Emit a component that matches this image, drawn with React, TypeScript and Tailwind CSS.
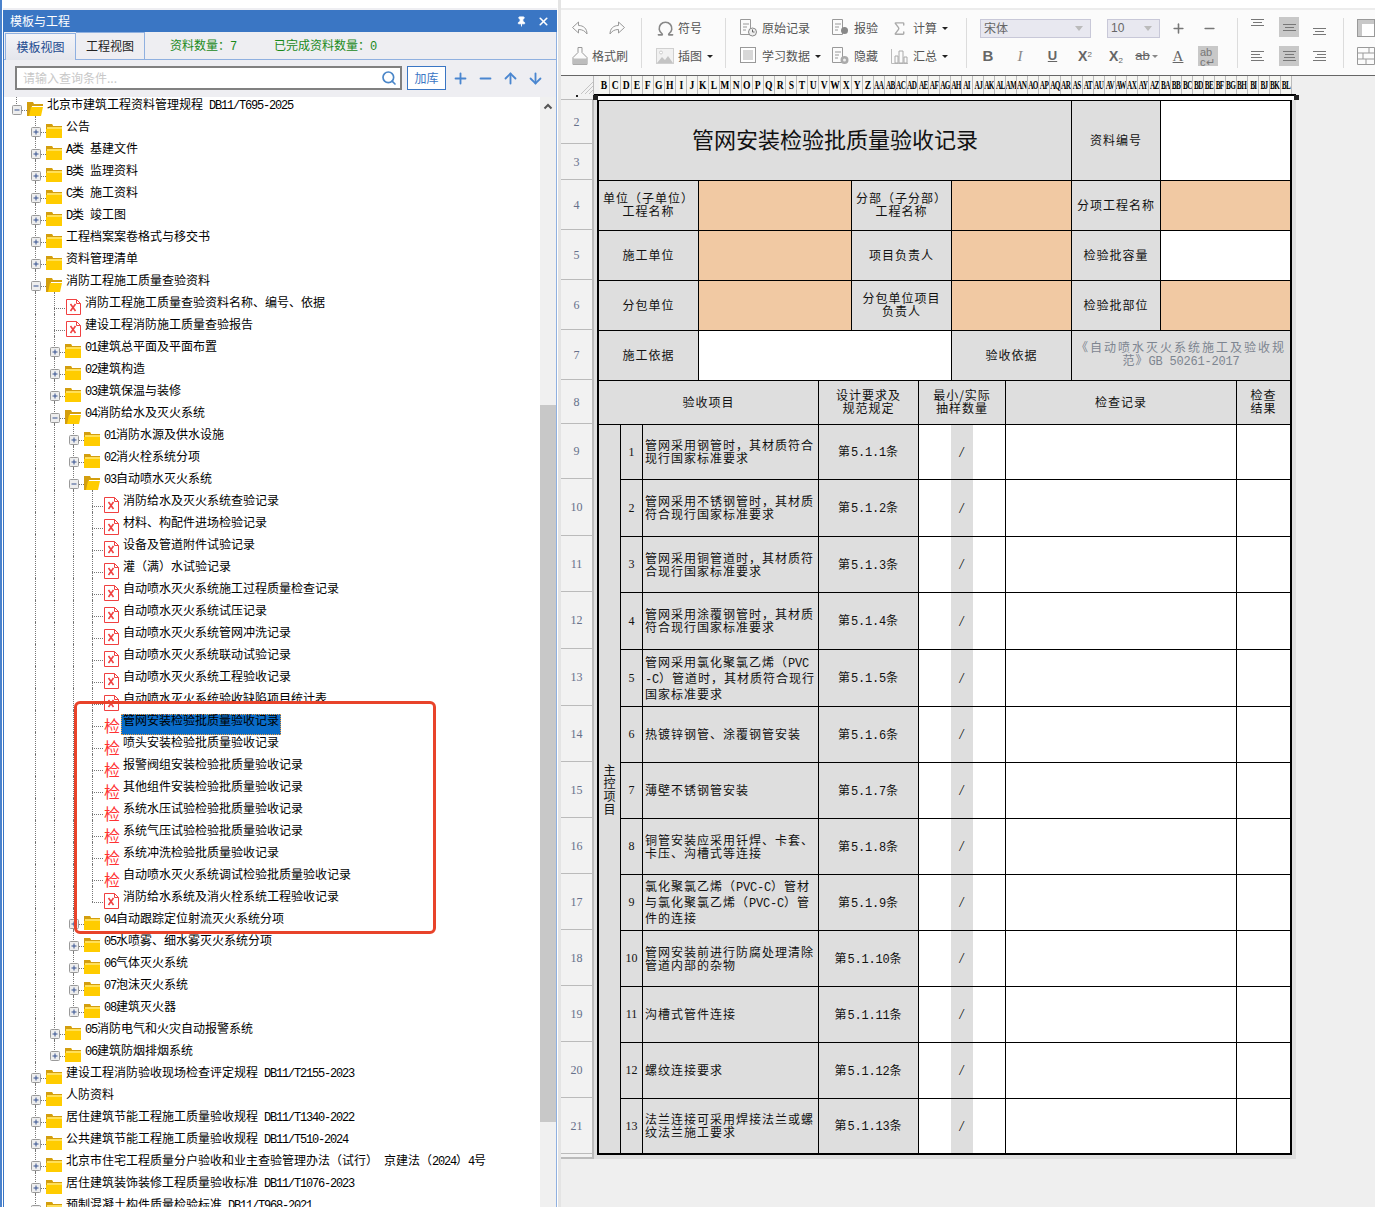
import React from "react";
import { ArrowDown, ArrowUp, Minus, Omega, Pin, Plus, Search, Sigma, X } from "lucide-react";

type Kind = "closed" | "open" | "x" | "jian";

// depth, icon, label
const treeRows: [number, Kind, string][] = [
  [0, "open", "北京市建筑工程资料管理规程 DB11/T695-2025"],
  [1, "closed", "公告"],
  [1, "closed", "A类 基建文件"],
  [1, "closed", "B类 监理资料"],
  [1, "closed", "C类 施工资料"],
  [1, "closed", "D类 竣工图"],
  [1, "closed", "工程档案案卷格式与移交书"],
  [1, "closed", "资料管理清单"],
  [1, "open", "消防工程施工质量查验资料"],
  [2, "x", "消防工程施工质量查验资料名称、编号、依据"],
  [2, "x", "建设工程消防施工质量查验报告"],
  [2, "closed", "01建筑总平面及平面布置"],
  [2, "closed", "02建筑构造"],
  [2, "closed", "03建筑保温与装修"],
  [2, "open", "04消防给水及灭火系统"],
  [3, "closed", "01消防水源及供水设施"],
  [3, "closed", "02消火栓系统分项"],
  [3, "open", "03自动喷水灭火系统"],
  [4, "x", "消防给水及灭火系统查验记录"],
  [4, "x", "材料、构配件进场检验记录"],
  [4, "x", "设备及管道附件试验记录"],
  [4, "x", "灌（满）水试验记录"],
  [4, "x", "自动喷水灭火系统施工过程质量检查记录"],
  [4, "x", "自动喷水灭火系统试压记录"],
  [4, "x", "自动喷水灭火系统管网冲洗记录"],
  [4, "x", "自动喷水灭火系统联动试验记录"],
  [4, "x", "自动喷水灭火系统工程验收记录"],
  [4, "x", "自动喷水灭火系统验收缺陷项目统计表"],
  [4, "jian", "管网安装检验批质量验收记录"],
  [4, "jian", "喷头安装检验批质量验收记录"],
  [4, "jian", "报警阀组安装检验批质量验收记录"],
  [4, "jian", "其他组件安装检验批质量验收记录"],
  [4, "jian", "系统水压试验检验批质量验收记录"],
  [4, "jian", "系统气压试验检验批质量验收记录"],
  [4, "jian", "系统冲洗检验批质量验收记录"],
  [4, "jian", "自动喷水灭火系统调试检验批质量验收记录"],
  [4, "x", "消防给水系统及消火栓系统工程验收记录"],
  [3, "closed", "04自动跟踪定位射流灭火系统分项"],
  [3, "closed", "05水喷雾、细水雾灭火系统分项"],
  [3, "closed", "06气体灭火系统"],
  [3, "closed", "07泡沫灭火系统"],
  [3, "closed", "08建筑灭火器"],
  [2, "closed", "05消防电气和火灾自动报警系统"],
  [2, "closed", "06建筑防烟排烟系统"],
  [1, "closed", "建设工程消防验收现场检查评定规程 DB11/T2155-2023"],
  [1, "closed", "人防资料"],
  [1, "closed", "居住建筑节能工程施工质量验收规程 DB11/T1340-2022"],
  [1, "closed", "公共建筑节能工程施工质量验收规程 DB11/T510-2024"],
  [1, "closed", "北京市住宅工程质量分户验收和业主查验管理办法（试行） 京建法（2024）4号"],
  [1, "closed", "居住建筑装饰装修工程质量验收标准 DB11/T1076-2023"],
  [1, "closed", "预制混凝土构件质量检验标准 DB11/T968-2021"],
];

const inspectRows: [string[], string][] = [
  [["管网采用钢管时，其材质符合", "现行国家标准要求"], "第5.1.1条"],
  [["管网采用不锈钢管时，其材质", "符合现行国家标准要求"], "第5.1.2条"],
  [["管网采用铜管道时，其材质符", "合现行国家标准要求"], "第5.1.3条"],
  [["管网采用涂覆钢管时，其材质", "符合现行国家标准要求"], "第5.1.4条"],
  [["管网采用氯化聚氯乙烯（PVC", "-C）管道时，其材质符合现行", "国家标准要求"], "第5.1.5条"],
  [["热镀锌钢管、涂覆钢管安装"], "第5.1.6条"],
  [["薄壁不锈钢管安装"], "第5.1.7条"],
  [["铜管安装应采用钎焊、卡套、", "卡压、沟槽式等连接"], "第5.1.8条"],
  [["氯化聚氯乙烯（PVC-C）管材", "与氯化聚氯乙烯（PVC-C）管", "件的连接"], "第5.1.9条"],
  [["管网安装前进行防腐处理清除", "管道内部的杂物"], "第5.1.10条"],
  [["沟槽式管件连接"], "第5.1.11条"],
  [["螺纹连接要求"], "第5.1.12条"],
  [["法兰连接可采用焊接法兰或螺", "纹法兰施工要求"], "第5.1.13条"],
];

const rowHeaders: [string, string][] = [
  ["2", "h-[44px]"], ["3", "h-[36px]"], ["4", "h-[50px]"], ["5", "h-[50px]"], ["6", "h-[50px]"],
  ["7", "h-[50px]"], ["8", "h-[44px]"], ["9", "h-[55px]"], ["10", "h-[57px]"], ["11", "h-[56px]"],
  ["12", "h-[57px]"], ["13", "h-[57px]"], ["14", "h-[56px]"], ["15", "h-[56px]"], ["16", "h-[56px]"],
  ["17", "h-[56px]"], ["18", "h-[56px]"], ["19", "h-[56px]"], ["20", "h-[56px]"], ["21", "h-[56px]"],
];

const letters = "ABCDEFGHIJKLMNOPQRSTUVWXYZ".split("");
const columns = [
  ...letters.slice(1),
  ...letters.map((l) => "A" + l),
  ...letters.slice(0, 12).map((l) => "B" + l),
];

// latin runs in the old Song font are 6px wide and tall, so squeeze Liberation Mono to that
function Mix({ t, wide }: { t: string; wide?: boolean }) {
  return (
    <>
      {t.split(/([\x20-\x7e]+)/).map((s, i) =>
        /^[\x20-\x7e]+$/.test(s) ? (
          <span key={i} className={`font-['Liberation_Mono',monospace] text-[12px] ${wide ? "tracking-[-.2px]" : "tracking-[-1.2px]"}`}>{s}</span>
        ) : (
          s
        )
      )}
    </>
  );
}

function Folder({ open }: { open: boolean }) {
  return open ? (
    <svg width="16" height="14" viewBox="0 0 16 14">
      <path d="M0 0h6l1 2h9v2H5L3 14H0z" fill="#d39e0e" />
      <path d="M4 5h12l-2 9H2z" fill="#ffcc00" />
    </svg>
  ) : (
    <svg width="16" height="14" viewBox="0 0 16 14">
      <path d="M0 0h6l1 2h9v12H0z" fill="#ffcc00" />
      <path d="M0 0h6l1 2h9v1H1v2H0z" fill="#d39e0e" />
      <path d="M1 4h15" stroke="#fff3b0" />
    </svg>
  );
}

function XDoc() {
  return (
    <svg width="15" height="16" viewBox="0 0 15 16">
      <path d="M.5.5h10l4 4v11H.5z" fill="#fff" stroke="#f04040" />
      <path d="M10.5.5v4h4" fill="none" stroke="#f04040" />
      <path d="M4.5 5l5 7M9.5 5l-5 7" stroke="#f04040" strokeWidth="1.6" />
    </svg>
  );
}

function Expander({ open }: { open: boolean }) {
  return (
    <svg width="10" height="10" viewBox="0 0 10 10" className="block">
      <rect x=".5" y=".5" width="9" height="9" rx="1" fill="#eeeeee" stroke="#9a9a9a" />
      <path d="M2.5 5h5" stroke="#35508f" />
      {!open && <path d="M5 2.5v5" stroke="#35508f" />}
    </svg>
  );
}

function TreeRow({ index }: { index: number }) {
  const [depth, kind, label] = treeRows[index];
  const next = treeRows[index + 1];
  const last = depth === 0 || (next && next[0] < depth);
  const folder = kind === "open" || kind === "closed";
  const selected = index === 28;
  return (
    <div className="flex h-[22px] pl-[16px] text-[12px] leading-[13px] text-black whitespace-pre">
      {Array.from({ length: depth }).map((_, k) => (
        <div key={k} className={`w-[19px] h-full ${k > 0 ? "border-l border-dotted border-[#777]" : ""}`} />
      ))}
      <div className="relative w-[11px] h-full shrink-0">
        <div className={`absolute left-0 top-0 border-l border-dotted border-[#777] ${last ? "h-[16px]" : "h-full"}`} />
        <div className="absolute left-0 top-[16px] w-[11px] border-t border-dotted border-[#777]" />
        {folder && (
          <div className="absolute left-[-4px] top-[11px]">
            <Expander open={kind === "open"} />
          </div>
        )}
      </div>
      <div className="w-[17px] shrink-0">
        {folder && <div className="mt-[8px]"><Folder open={kind === "open"} /></div>}
        {kind === "x" && <div className="mt-[7px] ml-[1px]"><XDoc /></div>}
        {kind === "jian" && <div className="mt-[7px] ml-[1px] text-[16px] leading-[16px] text-[#ff3333]">检</div>}
      </div>
      {selected ? (
        <span className="mt-[4px] ml-[1px] h-[21px] px-px bg-[#0a6cc9] border border-dotted border-[#f0a040]">
          <span className="relative -top-[2px]"><Mix t={label} /></span>
        </span>
      ) : (
        <span className={`mt-[3px] ml-[3px] ${index === 27 ? "h-[10px] overflow-hidden" : ""}`}>
          <Mix t={label} />
        </span>
      )}
    </div>
  );
}

function LeftPanel() {
  return (
    <div className="w-[554px] ml-[3px] shrink-0 mt-[8px] flex flex-col bg-[#eeeef2] border-t-2 border-[#eeeef2] overflow-hidden">
      <div className="h-[22px] bg-[#3a76c4] flex items-center pl-[7px] pr-[7px] text-white text-[12px] shrink-0">
        <span className="flex-1">模板与工程</span>
        <Pin size={11} className="mr-[10px] fill-white" />
        <X size={13} strokeWidth={3} />
      </div>
      <div className="border-l border-[#3a76c4] border-r border-r-[#8fb0e0] flex-1 flex flex-col min-h-0">
        <div className="h-[28px] flex items-end border-b border-[#8fb0e0] text-[12px] shrink-0">
          <div className="ml-px w-[71px] h-[27px] -mb-px flex items-center justify-center text-[#1c4a8f] border-t border-x border-[#8fb0e0] bg-gradient-to-b from-[#f4f4f8] to-[#e4e6ec]">模板视图</div>
          <div className="w-[69px] h-[27px] flex items-center justify-center text-[#222] border-t border-r border-[#8fb0e0]">工程视图</div>
          <div className="ml-[25px] mb-[3px] text-[#1a8a1a]">资料数量：<Mix t="7" /></div>
          <div className="ml-[38px] mb-[3px] text-[#1a8a1a]">已完成资料数量：<Mix t="0" /></div>
        </div>
        <div className="h-[37px] flex items-start pt-[6px] pl-[11px] shrink-0">
          <div className="w-[387px] h-[24px] bg-white border-2 border-[#808080] flex items-center pl-[6px] pr-[3px] text-[12px] text-[#c8c8c8]">
            <span className="flex-1">请输入查询条件...</span>
            <Search size={16} strokeWidth={2.5} className="text-[#4a86c8]" />
          </div>
          <div className="ml-[5px] w-[39px] h-[24px] bg-white border border-[#3a76c4] flex items-center justify-center text-[12px] text-[#3a76c4]">加库</div>
          <div className="flex items-center h-[24px] text-[#4a86d0] ml-[6px] gap-[8px]">
            <Plus size={17} strokeWidth={2.6} />
            <Minus size={17} strokeWidth={2.6} />
            <ArrowUp size={17} strokeWidth={2.6} />
            <ArrowDown size={17} strokeWidth={2.6} />
          </div>
        </div>
        <div className="flex-1 flex min-h-0 bg-white overflow-hidden">
          <div className="flex-1 min-w-0 overflow-hidden">
            <div className="-mt-[3px] -ml-[4px]">
              {treeRows.map((_, i) => <TreeRow key={i} index={i} />)}
            </div>
          </div>
          <div className="w-[16px] bg-[#f0f0f0] flex flex-col shrink-0">
            <svg width="16" height="20" viewBox="0 0 16 20" className="shrink-0">
              <path d="M4.5 11.500L8 8l3.500 3.500" fill="none" stroke="#555" strokeWidth="2" />
            </svg>
            <div className="h-[288px] shrink-0" />
            <div className="h-[717px] shrink-0 bg-[#c8c8c8]" />
          </div>
        </div>
      </div>
    </div>
  );
}

function Caret() {
  return <span className="ml-[5px] w-0 h-0 border-x-[3px] border-x-transparent border-t-[3px] border-t-[#222] inline-block" />;
}

const iconBase = "shrink-0 text-[#999]";

function Undo({ flip }: { flip?: boolean }) {
  return (
    <svg width="18" height="16" viewBox="0 0 18 16" className={`${iconBase} ${flip ? "-scale-x-100" : ""}`}>
      <path d="M7.5 2L1.5 7.5l6 5.5V9.5c4 0 6.5 1.5 8.5 4.5 0-5.500-3.500-8.500-8.500-8.500z" fill="none" stroke="currentColor" />
    </svg>
  );
}

function Brush() {
  return (
    <svg width="18" height="20" viewBox="0 0 18 20" className={iconBase}>
      <path d="M7 1.500h4v5l5 5v7H2v-7l5-5z" fill="none" stroke="currentColor" />
      <path d="M2 12.500h14v6H2z" fill="#bdbdbd" />
    </svg>
  );
}

function ImageIcon() {
  return (
    <svg width="18" height="16" viewBox="0 0 18 16" className={iconBase}>
      <rect x=".5" y=".5" width="17" height="15" fill="#f1f1f1" stroke="#d0d0d0" />
      <circle cx="5" cy="4.500" r="1.500" fill="#fff" stroke="#ccc" />
      <path d="M1 15l5-6 3 3 3-4 5 7z" fill="#c4c4c4" />
    </svg>
  );
}

function DocIcon({ badge }: { badge: "clock" | "dot" | "gear" }) {
  return (
    <svg width="18" height="18" viewBox="0 0 18 18" className={iconBase}>
      <path d="M.5.500h10v15H.5z" fill="none" stroke="currentColor" />
      <path d="M3 5h6M3 8h4M3 11h3" stroke="currentColor" />
      {badge === "clock" && (
        <>
          <circle cx="12.500" cy="13" r="4" fill="#eee" stroke="#888" />
          <path d="M12.500 10.500V13h2" fill="none" stroke="#666" />
        </>
      )}
      {badge === "dot" && <circle cx="12.500" cy="11.500" r="3.500" fill="#888" />}
      {badge === "gear" && (
        <>
          <circle cx="12.500" cy="13" r="4" fill="#aaa" />
          <circle cx="12.500" cy="13" r="1.500" fill="#eee" />
        </>
      )}
    </svg>
  );
}

function StudyIcon() {
  return (
    <svg width="18" height="18" viewBox="0 0 18 18" className={iconBase}>
      <rect x=".5" y=".5" width="15" height="15" fill="#fff" stroke="currentColor" />
      <rect x="3" y="3" width="10" height="10" fill="#d8d8d8" />
    </svg>
  );
}

function ChartIcon() {
  return (
    <svg width="18" height="16" viewBox="0 0 18 16" className={iconBase}>
      <path d="M.5 1v14.500H17" fill="none" stroke="#bbb" />
      <path d="M4 8h3v7H4zM8 3h4v12H8zM13 9h3v6h-3z" fill="none" stroke="#aaa" />
    </svg>
  );
}

function Lines({ widths, align = "center" }: { widths: number[]; align?: "left" | "center" | "right" }) {
  const alignClass = align === "left" ? "items-start" : align === "right" ? "items-end" : "items-center";
  const size: Record<number, string> = { 9: "w-[9px]", 11: "w-[11px]", 13: "w-[13px]" };
  return (
    <div className={`flex flex-col gap-[2px] ${alignClass} w-[13px]`}>
      {widths.map((w, i) => <span key={i} className={`h-px bg-[#777] ${size[w]}`} />)}
    </div>
  );
}

function ToolLabel({ icon, text, caret }: { icon: React.ReactNode; text: string; caret?: boolean }) {
  return (
    <div className="flex items-center h-[28px] text-[12px] text-[#555]">
      <div className="w-[22px] shrink-0">{icon}</div>
      <span>{text}</span>
      {caret && <Caret />}
    </div>
  );
}

function Divider() {
  return <div className="w-px h-[50px] self-center bg-[#dcdcdc] shrink-0" />;
}

function Toolbar() {
  return (
    <div className="h-[68px] bg-[#fbfbfb] border-t-2 border-[#ececec] border-b border-b-[#666] flex shrink-0 overflow-hidden">
      <div className="w-[80px] shrink-0 pt-[4px] pl-[10px]">
        <div className="flex items-center gap-[19px] h-[28px]"><Undo /><Undo flip /></div>
        <div className="flex items-center h-[28px] text-[12px] text-[#555]">
          <div className="w-[21px]"><Brush /></div>格式刷
        </div>
      </div>
      <Divider />
      <div className="w-[83px] shrink-0 pt-[4px] pl-[14px]">
        <ToolLabel icon={<Omega size={19} className="text-[#888]" />} text="符号" />
        <ToolLabel icon={<ImageIcon />} text="插图" caret />
      </div>
      <Divider />
      <div className="w-[240px] shrink-0 pt-[4px] pl-[14px] grid grid-cols-[92px_59px_1fr] grid-rows-[28px_28px] content-start">
        <ToolLabel icon={<DocIcon badge="clock" />} text="原始记录" />
        <ToolLabel icon={<DocIcon badge="dot" />} text="报验" />
        <ToolLabel icon={<Sigma size={17} className="text-[#aaa]" />} text="计算" caret />
        <ToolLabel icon={<StudyIcon />} text="学习数据" caret />
        <ToolLabel icon={<DocIcon badge="gear" />} text="隐藏" />
        <ToolLabel icon={<ChartIcon />} text="汇总" caret />
      </div>
      <Divider />
      <div className="w-[270px] shrink-0 pt-[4px]">
        <div className="flex items-center h-[28px] pl-[13px]">
          <div className="w-[111px] h-[19px] bg-[#e8e8f0] border border-[#c8c8d8] flex items-center px-[3px] text-[12px] text-[#666]">
            <span className="flex-1">宋体</span>
            <span className="mr-[4px] w-0 h-0 border-x-[4px] border-x-transparent border-t-[5px] border-t-[#bbb]" />
          </div>
          <div className="ml-[16px] w-[53px] h-[19px] bg-[#e8e8f0] border border-[#c8c8d8] flex items-center px-[3px] text-[12px] text-[#666]">
            <span className="flex-1 font-['Liberation_Sans',sans-serif]">10</span>
            <span className="mr-[4px] w-0 h-0 border-x-[4px] border-x-transparent border-t-[5px] border-t-[#bbb]" />
          </div>
          <Plus size={15} strokeWidth={2.5} className="ml-[11px] text-[#777]" />
          <Minus size={15} strokeWidth={2.5} className="ml-[16px] text-[#777]" />
        </div>
        <div className="flex items-center h-[28px] pl-[5px] text-[#666]">
          <div className="w-[32px] text-center font-['Liberation_Sans',sans-serif] font-bold text-[15px]">B</div>
          <div className="w-[32px] text-center font-['Liberation_Serif',serif] italic text-[15px] text-[#888]">I</div>
          <div className="w-[33px] text-center font-['Liberation_Sans',sans-serif] font-bold text-[13px] underline">U</div>
          <div className="w-[32px] text-center font-['Liberation_Sans',sans-serif] font-bold text-[14px]">X<sup className="text-[8px] font-normal">2</sup></div>
          <div className="w-[30px] text-center font-['Liberation_Sans',sans-serif] font-bold text-[14px]">X<sub className="text-[8px] font-normal">2</sub></div>
          <div className="w-[31px] flex items-center justify-center font-['Liberation_Sans',sans-serif] text-[13px] line-through">ab<span className="ml-[2px] w-0 h-0 border-x-[3px] border-x-transparent border-t-[3px] border-t-[#888]" /></div>
          <div className="w-[32px] text-center font-['Liberation_Serif',serif] text-[15px] underline">A</div>
          <div className="w-[20px] h-[20px] ml-[4px] bg-[#c8c8c8] text-[#777] font-['Liberation_Sans',sans-serif] text-[11px] leading-[10px] pl-[2px] pt-px">ab<br />c↵</div>
        </div>
      </div>
      <Divider />
      <div className="w-[105px] shrink-0 pt-[4px] pl-[9px]">
        <div className="flex h-[28px] gap-[12px]">
          <div className="w-[20px] h-[20px] mt-[3px] flex justify-center pt-[2px]"><Lines widths={[13, 9, 13]} /></div>
          <div className="w-[20px] h-[20px] mt-[3px] bg-[#c8c8c8] flex items-center justify-center"><Lines widths={[13, 9, 13]} /></div>
          <div className="w-[20px] h-[20px] mt-[3px] -ml-[2px] flex justify-center items-end pb-[2px]"><Lines widths={[13, 9, 13]} /></div>
        </div>
        <div className="flex h-[28px] gap-[12px]">
          <div className="w-[20px] h-[20px] mt-[4px] flex items-center justify-center"><Lines widths={[13, 9, 11, 13]} align="left" /></div>
          <div className="w-[20px] h-[20px] mt-[4px] bg-[#c8c8c8] flex items-center justify-center"><Lines widths={[13, 9, 11, 13]} /></div>
          <div className="w-[20px] h-[20px] mt-[4px] -ml-[2px] flex items-center justify-center"><Lines widths={[13, 9, 11, 13]} align="right" /></div>
        </div>
      </div>
      <Divider />
      <div className="pt-[4px] pl-[13px]">
        <svg width="18" height="18" viewBox="0 0 18 18" className="mt-[5px] block">
          <rect x=".5" y=".5" width="17" height="17" fill="#fff" stroke="#999" />
          <path d="M1 1h16v4H5v12H1z" fill="#c8c8c8" />
        </svg>
        <svg width="18" height="18" viewBox="0 0 18 18" className="mt-[10px] block">
          <path d="M.5.500h17v17H.5zM.5 6h17M.5 12h17M6 6v6M12 .500v5.500M9 12v5.500" fill="none" stroke="#999" />
        </svg>
      </div>
    </div>
  );
}

function ColumnHeader() {
  return (
    <div className="h-[18px] flex shrink-0 bg-[#efefef]">
      <div className="w-[33px] h-full border-r border-[#bbb] bg-[#f2f2f2] flex items-end justify-end shrink-0">
        <svg width="12" height="12" viewBox="0 0 12 12">
          <path d="M0 12L12 0M4 12l8-8M8 12l4-4" stroke="#c4c4c4" />
        </svg>
      </div>
      <div className="w-[5px] bg-[#f2f2f2] shrink-0" />
      {columns.map((c) => (
        <div key={c} className="w-[11px] shrink-0 h-full bg-[#f6f6f2] border-r border-[#bbb] flex items-center justify-center font-['Liberation_Serif',serif] font-bold text-[12px] leading-none text-black overflow-hidden">
          <span className={c.length > 1 ? "inline-block scale-x-[.6] whitespace-nowrap tracking-[-1px]" : "inline-block scale-x-[.8]"}>{c}</span>
        </div>
      ))}
    </div>
  );
}

function RowHeader() {
  return (
    <div className="w-[33px] shrink-0 flex flex-col">
      <div className="h-[6px] bg-[#f2f2f2] border-b border-[#bbb] border-r flex justify-center">
        <span className="w-[2px] h-[2px] bg-[#222] mt-px" />
      </div>
      {rowHeaders.map(([label, h]) => (
        <div key={label} className={`${h} bg-[#f2f2f2] border-r-2 border-b border-[#bbb] flex items-center justify-center font-['Liberation_Serif',serif] text-[12px] text-[#66708a]`}>
          {label}
        </div>
      ))}
      <div className="h-[5px] bg-[#f2f2f2] border-r-2 border-b-2 border-[#bbb]" />
    </div>
  );
}

const gray = "bg-[#dedede] flex items-center justify-center text-center";
const label = `${gray} pb-[3px]`;
const peach = "bg-[#f1c9a3]";

function Sheet() {
  return (
    <div className="relative w-[702px] h-[1065px] bg-[#dfdfdf] shrink-0">
      <div className="h-[2px] bg-black" />
      <div className="h-[4px] bg-white" />
      <div className="absolute left-[-1px] top-[1px] w-[5px] h-[5px] bg-[#222]" />
      <div className="absolute right-[-3px] top-[1px] w-[5px] h-[5px] bg-[#222]" />
      <div className="ml-[3px] w-[695px] bg-black border-x-2 border-b-2 border-t border-black grid grid-cols-[21px_21px_55px_119px_32px_66px_32px_20px_32px_65px_88px_75px_53px] grid-rows-[79px_49px_49px_49px_49px_43px_54px_56px_55px_56px_56px_55px_55px_55px_55px_55px_55px_55px_54px] gap-px text-[12px] leading-[13px] tracking-[1px] text-[#111] whitespace-pre">
        <div className={`${gray} col-span-10 pb-[6px] text-[22px] leading-none tracking-normal`}>管网安装检验批质量验收记录</div>
        <div className={label}>资料编号</div>
        <div className="col-span-2 bg-white" />

        <div className={`${label} col-span-3`}>单位（子单位）{"\n"}工程名称</div>
        <div className={`${peach} col-span-2`} />
        <div className={`${label} col-span-2`}>分部（子分部）{"\n"}工程名称</div>
        <div className={`${peach} col-span-3`} />
        <div className={label}>分项工程名称</div>
        <div className={`${peach} col-span-2`} />

        <div className={`${label} col-span-3`}>施工单位</div>
        <div className={`${peach} col-span-2`} />
        <div className={`${label} col-span-2`}>项目负责人</div>
        <div className={`${peach} col-span-3`} />
        <div className={label}>检验批容量</div>
        <div className="col-span-2 bg-white" />

        <div className={`${label} col-span-3`}>分包单位</div>
        <div className={`${peach} col-span-2`} />
        <div className={`${label} col-span-2`}>分包单位项目{"\n"}负责人</div>
        <div className={`${peach} col-span-3`} />
        <div className={label}>检验批部位</div>
        <div className={`${peach} col-span-2`} />

        <div className={`${label} col-span-3`}>施工依据</div>
        <div className="col-span-4 bg-white" />
        <div className={`${label} col-span-3`}>验收依据</div>
        <div className={`${label} col-span-3 text-[#7d8590] tracking-[2px]`}>
          <span>《自动喷水灭火系统施工及验收规{"\n"}<span className="tracking-[1px]">范》<Mix t="GB 50261-2017" wide /></span></span>
        </div>

        <div className={`${label} col-span-4`}>验收项目</div>
        <div className={`${label} col-span-2`}>设计要求及{"\n"}规范规定</div>
        <div className={`${label} col-span-3`}>最小/实际{"\n"}抽样数量</div>
        <div className={`${label} col-span-3`}>检查记录</div>
        <div className={label}>检查{"\n"}结果</div>

        <div className={`${gray} row-span-13 w-full`}>
          <span className="w-[13px] tracking-normal whitespace-normal leading-[13px] break-all">主控项目</span>
        </div>
        {inspectRows.map(([lines, code], i) => (
          <React.Fragment key={code}>
            <div className={`${gray} font-['Liberation_Serif',serif] tracking-normal`}>{i + 1}</div>
            <div className="col-span-2 bg-[#dedede] flex items-center pl-[2px] pb-[2px]">
              <span><Mix t={lines.join("\n")} wide /></span>
            </div>
            <div className={`${gray} col-span-2`}><span><Mix t={code} wide /></span></div>
            <div className="col-span-3 bg-white grid grid-cols-[32px_22px_1fr]">
              <div />
              <div className="bg-[#dedede] flex items-center justify-center font-['Liberation_Serif',serif] italic text-[14px] text-black">/</div>
              <div />
            </div>
            <div className="col-span-3 bg-white" />
            <div className="bg-white" />
          </React.Fragment>
        ))}
      </div>
    </div>
  );
}

export default function App() {
  return (
    <div className="relative w-[1375px] h-[1207px] overflow-hidden bg-white flex font-['Noto_Sans_CJK_SC',sans-serif]">
      <LeftPanel />
      <div className="w-[3px] shrink-0 ml-px bg-[#e4e4e4]" />
      <div className="flex-1 min-w-0 mt-[8px] flex flex-col bg-[#efefef] overflow-hidden">
        <Toolbar />
        <ColumnHeader />
        <div className="flex">
          <RowHeader />
          <Sheet />
        </div>
      </div>
      <div className="absolute left-0 top-0 w-[2px] h-full bg-[#4a82cc]" />
      <div className="absolute left-[74px] top-[701px] w-[362px] h-[233px] border-[3px] border-[#e8432a] rounded-[6px]" />
    </div>
  );
}
